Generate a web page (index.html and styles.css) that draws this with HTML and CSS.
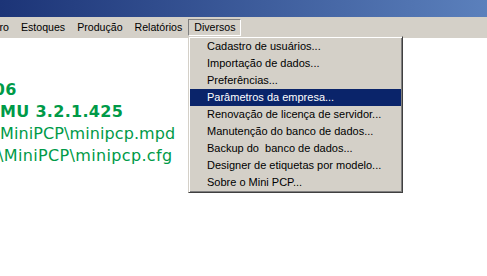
FILE: index.html
```html
<!DOCTYPE html>
<html lang="pt-BR">
<head>
    <meta charset="UTF-8">
    <title>Mini PCP</title>
    <link rel="stylesheet" href="styles.css">
</head>
<body>
    <div class="titlebar"></div>

    <div class="menubar">
        <span class="menu-item first">Cadastro</span>
        <span class="menu-item">Estoques</span>
        <span class="menu-item">Produção</span>
        <span class="menu-item">Relatórios</span>
        <span class="menu-item open">Diversos</span>
    </div>

    <div class="workspace">
        <div class="info">
            <div class="line bold l1">2006</div>
            <div class="line bold l2">MU 3.2.1.425</div>
            <div class="line l3">MiniPCP\minipcp.mpd</div>
            <div class="line l4">\MiniPCP\minipcp.cfg</div>
        </div>

        <!-- menu suspenso de Diversos -->
        <ul class="dropdown">
            <li>Cadastro de usuários...</li>
            <li>Importação de dados...</li>
            <li>Preferências...</li>
            <li class="selected">Parâmetros da empresa...</li>
            <li>Renovação de licença de servidor...</li>
            <li>Manutenção do banco de dados...</li>
            <li>Backup do&nbsp; banco de dados...</li>
            <li>Designer de etiquetas por modelo...</li>
            <li>Sobre o Mini PCP...</li>
        </ul>
    </div>
</body>
</html>
```

FILE: styles.css
```css
body {
    margin: 0;
    width: 487px;
    height: 276px;
    overflow: hidden;
    background: #ffffff;
    font-family: 'Liberation Sans', Arial, sans-serif;
    font-size: 11px;
}

.titlebar {
    height: 17px;
    background: linear-gradient(to right, #1c3477, #5b80bc);
}

.menubar {
    display: flex;
    align-items: center;
    height: 21px;
    background: #d4d0c8;
    color: #000;
    font-size: 10.6px;
}

.menu-item {
    padding: 1px 5px 2px;
    border: 1px solid transparent;
}

.menu-item.first {
    margin-left: -40px;
}

.menu-item.open {
    border-color: #808080 #ffffff #ffffff #808080;
}

.workspace {
    position: relative;
    height: 238px;
}

.info {
    padding-top: 42px;
    color: #009a48;
    font-family: 'DejaVu Sans', Verdana, sans-serif;
    font-size: 16px;
    overflow: hidden;
}

.line {
    height: 22px;
    white-space: nowrap;
}

.bold {
    font-weight: bold;
    letter-spacing: 0.3px;
}

.l1 { margin-left: -29px; }
.l2 { margin-left: 0; }
.l3 { margin-left: 0; letter-spacing: 0.1px; }
.l4 { margin-left: -2px; letter-spacing: 0.35px; }

.dropdown {
    position: absolute;
    left: 188px;
    top: -2px;
    width: 211px;
    margin: 0;
    padding: 1px;
    list-style: none;
    background: #d4d0c8;
    border: 1px solid;
    border-color: #d4d0c8 #404040 #404040 #d4d0c8;
    box-shadow: inset 1px 1px 0 #ffffff, inset -1px -1px 0 #808080;
}

.dropdown li {
    height: 17px;
    line-height: 17px;
    padding-left: 17px;
    white-space: nowrap;
}

.dropdown li.selected {
    background: #0a246a;
    color: #ffffff;
}
```
